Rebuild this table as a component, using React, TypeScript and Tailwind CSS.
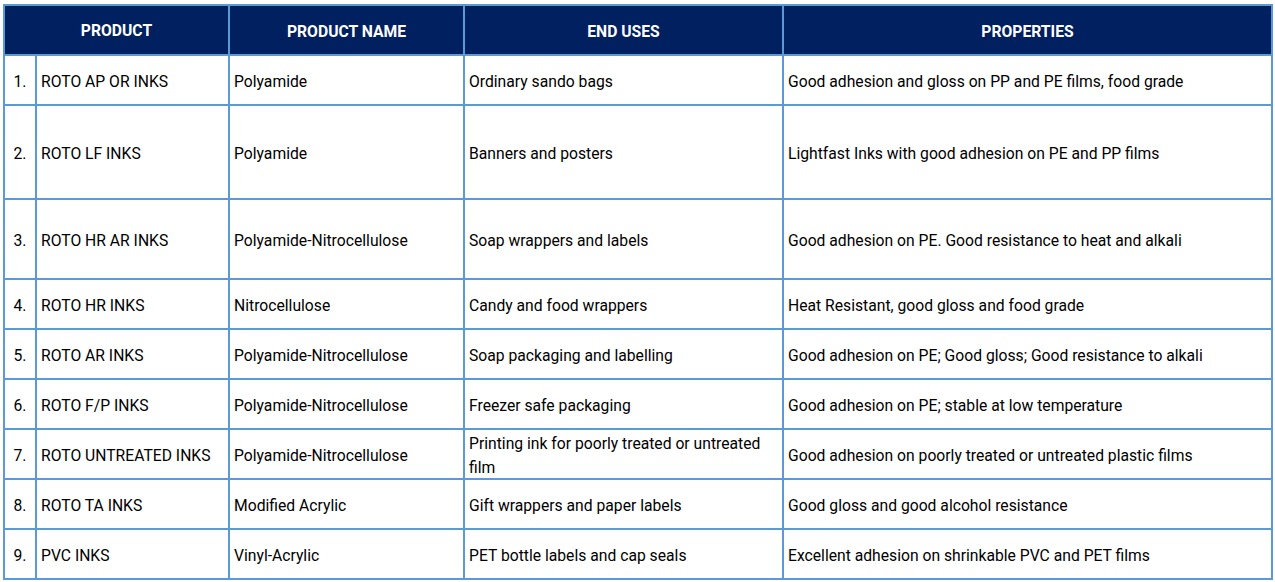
import React from "react";

const rows: [string, string, string, React.ReactNode, string][] = [
  ["1.", "ROTO AP OR INKS", "Polyamide", "Ordinary sando bags", "Good adhesion and gloss on PP and PE films, food grade"],
  ["2.", "ROTO LF INKS", "Polyamide", "Banners and posters", "Lightfast Inks with good adhesion on PE and PP films"],
  ["3.", "ROTO HR AR INKS", "Polyamide-Nitrocellulose", "Soap wrappers and labels", "Good adhesion on PE. Good resistance to heat and alkali"],
  ["4.", "ROTO HR INKS", "Nitrocellulose", "Candy and food wrappers", "Heat Resistant, good gloss and food grade"],
  ["5.", "ROTO AR INKS", "Polyamide-Nitrocellulose", "Soap packaging and labelling", "Good adhesion on PE; Good gloss; Good resistance to alkali"],
  ["6.", "ROTO F/P INKS", "Polyamide-Nitrocellulose", "Freezer safe packaging", "Good adhesion on PE; stable at low temperature"],
  ["7.", "ROTO UNTREATED INKS", "Polyamide-Nitrocellulose", <>Printing ink for poorly treated or untreated<br />film</>, "Good adhesion on poorly treated or untreated plastic films"],
  ["8.", "ROTO TA INKS", "Modified Acrylic", "Gift wrappers and paper labels", "Good gloss and good alcohol resistance"],
  ["9.", "PVC INKS", "Vinyl-Acrylic", "PET bottle labels and cap seals", "Excellent adhesion on shrinkable PVC and PET films"],
];

export default function App() {
  return (
    <div className="w-[1275px] h-[582px] bg-white pt-[4px] pl-[3px]" style={{ fontFamily: "Roboto, 'Liberation Sans', sans-serif" }}>
      <div className="inline-grid grid-cols-[30px_191px_233px_317px_487px] grid-rows-[48px_48px_92px_78px_48px_48px_48px_48px_48px_48px] gap-[2px] p-[2px] bg-[#5b9bd5] text-[15.7px] text-black">
        <div className="col-span-2 bg-[#002060] text-white font-bold flex items-center justify-center pt-[1px]">PRODUCT</div>
        <div className="bg-[#002060] text-white font-bold flex items-center justify-center pt-[3px]">PRODUCT NAME</div>
        <div className="bg-[#002060] text-white font-bold flex items-center justify-center pt-[3px]">END USES</div>
        <div className="bg-[#002060] text-white font-bold flex items-center justify-center pt-[3px]">PROPERTIES</div>
        {rows.map((r, i) => (
          <React.Fragment key={i}>
            <div className="bg-white flex items-center justify-center pt-[3px]">{r[0]}</div>
            <div className="bg-white flex items-center pl-[4px] pt-[3px] whitespace-nowrap">{r[1]}</div>
            <div className="bg-white flex items-center pl-[4px] pt-[3px] whitespace-nowrap">{r[2]}</div>
            <div className="bg-white flex items-center pl-[4px] pt-[3px] leading-[24px]">
              <span>{r[3]}</span>
            </div>
            <div className="bg-white flex items-center pl-[4px] pt-[3px] whitespace-nowrap">{r[4]}</div>
          </React.Fragment>
        ))}
      </div>
    </div>
  );
}
